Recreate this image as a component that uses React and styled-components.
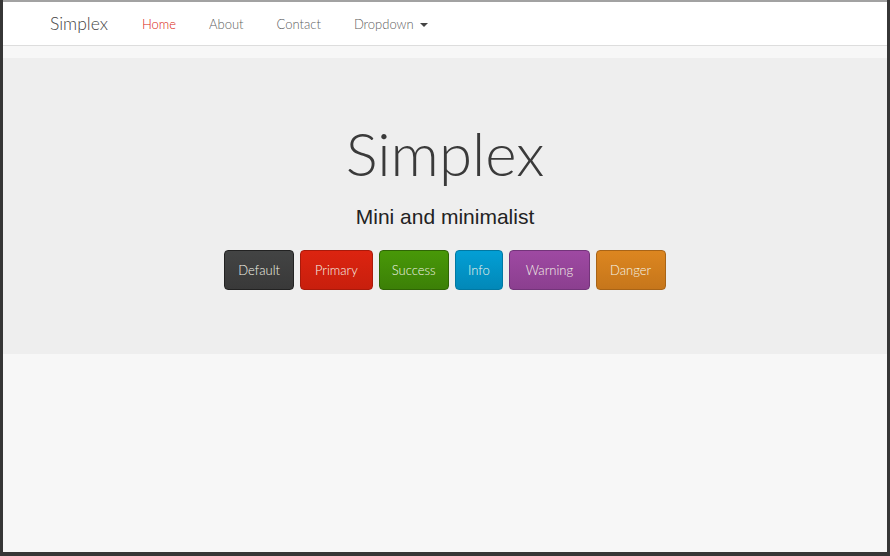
import React from 'react';
import styled, { createGlobalStyle } from 'styled-components';

const GlobalStyle = createGlobalStyle`
  html, body {
    margin: 0;
    padding: 0;
    background: #363636;
  }
  body {
    font-family: Lato, "Open Sans", sans-serif;
  }
`;

const Frame = styled.div`
  margin: 0 3px 0 3px;
  height: 552px;
  border-top: 2px solid #a2a2a2;
  box-sizing: border-box;
  background: #f7f7f7;
  display: flex;
  flex-direction: column;
  overflow: hidden;
`;

const Navbar = styled.nav`
  height: 43px;
  background: #fff;
  border-bottom: 1px solid #dddddd;
  display: flex;
  align-items: center;
  padding-left: 47px;
  flex-shrink: 0;
`;

const Brand = styled.a`
  font-size: 17.5px;
  font-weight: 300;
  color: #444;
  margin-right: 34px;
`;

const NavList = styled.ul`
  display: flex;
  align-items: center;
  gap: 33px;
  list-style: none;
  margin: 0;
  padding: 0;
`;

const NavLink = styled.li`
  font-size: 13px;
  font-weight: 300;
  color: ${(p) => (p.$active ? '#d9230f' : '#5e5e5e')};
  display: flex;
  align-items: center;
  gap: 6px;
`;

const Caret = styled.span`
  width: 0;
  height: 0;
  border-left: 4px solid transparent;
  border-right: 4px solid transparent;
  border-top: 4px solid #444;
  margin-top: 2px;
`;

const Jumbotron = styled.section`
  margin-top: 12px;
  height: 296px;
  background: #eeeeee;
  display: flex;
  flex-direction: column;
  align-items: center;
  flex-shrink: 0;
`;

const Title = styled.h1`
  margin: 65px 0 0;
  font-size: 60px;
  font-weight: 300;
  color: #3a3a3a;
  line-height: 1;
`;

const Lead = styled.p`
  margin: 23px 0 0;
  font-family: "Liberation Sans", Arial, sans-serif;
  font-size: 21px;
  color: #222;
  line-height: 1;
`;

const ButtonRow = styled.div`
  display: flex;
  gap: 6px;
  margin-top: 23px;
`;

const Button = styled.button`
  height: 40px;
  padding: 0 ${(p) => p.$pad}px;
  font-family: Lato, sans-serif;
  font-size: 13px;
  font-weight: 300;
  color: #f4f4e8;
  border: 1px solid ${(p) => p.$border};
  border-radius: 4px;
  background: linear-gradient(to bottom, ${(p) => p.$top}, ${(p) => p.$bottom});
  cursor: pointer;
`;

const buttons = [
  { label: 'Default', top: '#434444', bottom: '#393939', border: '#222', pad: 13 },
  { label: 'Primary', top: '#dc2410', bottom: '#c81f0d', border: '#a91a0b', pad: 14 },
  { label: 'Success', top: '#489808', bottom: '#3c8007', border: '#2f6505', pad: 12 },
  { label: 'Info', top: '#039fd5', bottom: '#0288b8', border: '#0178a2', pad: 12.5 },
  { label: 'Warning', top: '#9e49a2', bottom: '#8b3f8f', border: '#73347a', pad: 15.5 },
  { label: 'Danger', top: '#dc8620', bottom: '#c6761b', border: '#a86417', pad: 13.5 },
];

const App = () => {
  return (
    <>
      <GlobalStyle />
      <Frame>
        <Navbar>
          <Brand>Simplex</Brand>
          <NavList>
            <NavLink $active>Home</NavLink>
            <NavLink>About</NavLink>
            <NavLink>Contact</NavLink>
            <NavLink>
              Dropdown <Caret />
            </NavLink>
          </NavList>
        </Navbar>
        <Jumbotron>
          <Title>Simplex</Title>
          <Lead>Mini and minimalist</Lead>
          <ButtonRow>
            {buttons.map((b) => (
              <Button
                key={b.label}
                $top={b.top}
                $bottom={b.bottom}
                $border={b.border}
                $pad={b.pad}
              >
                {b.label}
              </Button>
            ))}
          </ButtonRow>
        </Jumbotron>
      </Frame>
    </>
  );
};

export default App;
